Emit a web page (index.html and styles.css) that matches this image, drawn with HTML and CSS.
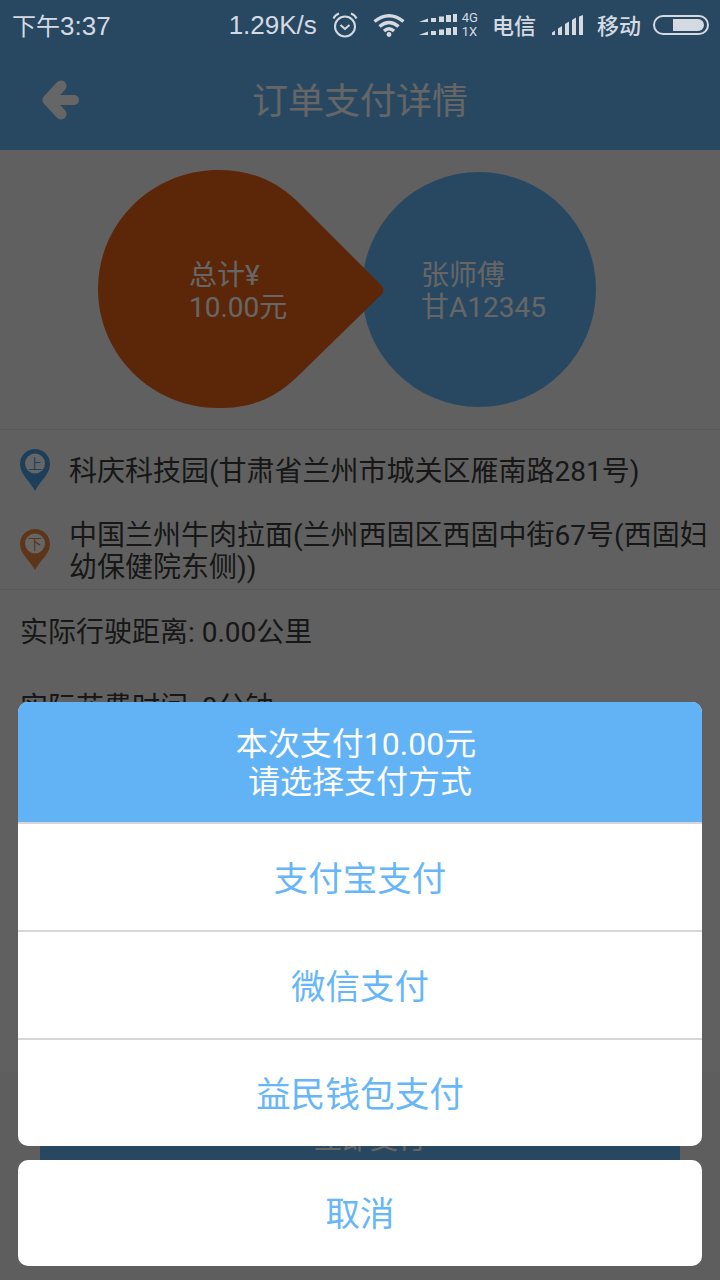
FILE: index.html
```html
<!DOCTYPE html>
<html lang="zh-CN">
<head>
    <meta charset="UTF-8">
    <meta name="viewport" content="width=device-width, initial-scale=1.0">
    <title>订单支付详情</title>
    <link rel="stylesheet" href="styles.css">
</head>
<body>

<div class="screen">

    <!-- Status bar sits above the dim layer -->
    <div class="status-bar">
        <div class="status-time"><span class="time-cn">下午</span>3:37</div>
        <div class="status-right">
            <span class="net-speed">1.29K/s</span>
            <svg class="icon-alarm" width="26" height="26" viewBox="0 0 26 26" fill="none" stroke="#d5dae2">
                <circle cx="13" cy="14.5" r="10" stroke-width="2"/>
                <path d="M8.5 13 L13 17 L17.5 13" stroke-width="2"/>
                <path d="M1.5 6.5 Q3 3 7 1.5 M24.5 6.5 Q23 3 19 1.5" stroke-width="2"/>
            </svg>
            <svg class="icon-wifi" width="32" height="24" viewBox="0 0 32 24" fill="none" stroke="#d5dae2" stroke-width="3.4">
                <path d="M1.5 8.5 Q16 -3 30.5 8.5"/>
                <path d="M6.5 13.5 Q16 5.5 25.5 13.5"/>
                <path d="M11 18 Q16 13.5 21 18"/>
                <circle cx="16" cy="21.5" r="2.4" fill="#d5dae2" stroke="none"/>
            </svg>
            <svg class="icon-data" width="38" height="22" viewBox="0 0 38 22" fill="#d5dae2">
                <path d="M0 8 L9 4.5 V8 Z M12 4 H17 V8 H12 Z M20 2.5 H25 V8 H20 Z M27 1 H32 V8 H27 Z M34 0 H38 V8 H34 Z"/>
                <path d="M0 21 L9 17.5 V21 Z M12 17 H17 V21 H12 Z M20 15.5 H25 V21 H20 Z M27 14 H32 V21 H27 Z M34 13 H38 V21 H34 Z"/>
            </svg>
            <span class="net-type">4G<br>1X</span>
            <span class="carrier carrier-first">电信</span>
            <svg class="icon-signal" width="31" height="20" viewBox="0 0 31 20" fill="#d5dae2">
                <path d="M0 20 V17.5 L3 15.5 V20 Z M6 20 V13.5 L10 11 V20 Z M13 20 V9 L17 6.5 V20 Z M20 20 V5 L24 2.5 V20 Z M27 20 V1.5 L31 0 V20 Z"/>
            </svg>
            <span class="carrier">移动</span>
            <div class="battery"><div class="battery-level"></div></div>
        </div>
    </div>

    <div class="page">
        <header class="top-bar">
            <div class="back">
                <svg width="38" height="40" viewBox="0 0 38 40" fill="none" stroke="#fff" stroke-linecap="round" stroke-linejoin="round">
                    <path d="M32 20 H10" stroke-width="10"/>
                    <path d="M19 6 L6 20 L19 34" stroke-width="11"/>
                </svg>
            </div>
            <h1>订单支付详情</h1>
        </header>

        <section class="summary">
            <div class="drop">
                <svg class="drop-shape" width="288" height="238" viewBox="0 0 288 238">
                    <path d="M120 0 C152 0 176 10 198 30 L283 115 Q288 120 283 125 L198 208 C174 230 152 238 120 238 C54 238 0 185 0 119 C0 53 54 0 120 0 Z" fill="#e66114"/>
                </svg>
                <div class="drop-text">总计¥<br>10.00元</div>
            </div>
            <div class="driver">
                <div class="driver-text">张师傅<br>甘A12345</div>
            </div>
        </section>

        <section class="route">
            <div class="route-row">
                <svg class="pin" width="30" height="42" viewBox="0 0 30 42">
                    <path d="M15 0 C6.7 0 0 6.7 0 15 C0 25 9 31 15 42 C21 31 30 25 30 15 C30 6.7 23.3 0 15 0 Z" fill="#4a9ee0"/>
                    <circle cx="15" cy="14.5" r="10" fill="#fff"/>
                    <text x="15" y="19.5" text-anchor="middle" class="pin-label pin-up">上</text>
                </svg>
                <div class="route-text">科庆科技园(甘肃省兰州市城关区雁南路281号)</div>
            </div>
            <div class="route-row">
                <svg class="pin" width="30" height="41" viewBox="0 0 30 41">
                    <path d="M15 0 C6.7 0 0 6.7 0 15 C0 25 9 30 15 41 C21 30 30 25 30 15 C30 6.7 23.3 0 15 0 Z" fill="#e8843c"/>
                    <circle cx="15" cy="14.5" r="10" fill="#fff"/>
                    <text x="15" y="19.5" text-anchor="middle" class="pin-label pin-down">下</text>
                </svg>
                <div class="route-text">中国兰州牛肉拉面(兰州西固区西固中街67号(西固妇幼保健院东侧))</div>
            </div>
        </section>

        <section class="trip-info">
            <p>实际行驶距离: 0.00公里</p>
            <p>实际花费时间: 0分钟</p>
        </section>

        <footer class="pay-bar">
            <button class="pay-btn">立即支付</button>
        </footer>
    </div>

    <!-- Dim layer + payment sheet -->
    <div class="overlay"></div>
    <div class="sheet-wrap">
        <div class="sheet">
            <div class="sheet-title">本次支付10.00元&nbsp;<br>请选择支付方式</div>
            <div class="sheet-option">支付宝支付</div>
            <div class="sheet-option">微信支付</div>
            <div class="sheet-option option-wide">益民钱包支付</div>
        </div>
        <div class="sheet cancel">取消</div>
    </div>

</div>

</body>
</html>
```

FILE: styles.css
```css
/* General page styling */
html, body {
    margin: 0;
    padding: 0;
}

body {
    font-family: Roboto, "Noto Sans CJK SC", sans-serif;
    background-color: #f0f0f0;
}

.screen {
    position: relative;
    width: 720px;
    height: 1280px;
    overflow: hidden;
    display: flex;
    flex-direction: column;
}

/* Status bar */
.status-bar {
    position: relative;
    z-index: 3;
    height: 50px;
    flex-shrink: 0;
    display: flex;
    justify-content: space-between;
    align-items: center;
    padding: 0 11px 0 12px;
    background-color: #284862;
    color: #d5dae2;
    font-family: "Liberation Sans", "Noto Sans CJK SC", sans-serif;
    font-size: 26px;
}

.status-time {
    margin-top: -2px;
}

.time-cn {
    font-size: 24px;
}

.status-right {
    display: flex;
    align-items: center;
}

.icon-alarm {
    margin-left: 15px;
}

.icon-wifi {
    margin-left: 15px;
}

.icon-data {
    margin-left: 14px;
}

.net-type {
    margin-left: 5px;
    font-family: Roboto, sans-serif;
    font-size: 13px;
    line-height: 14px;
}

.carrier {
    margin: -3px 0 0 14px;
    font-family: "Noto Sans CJK SC", sans-serif;
    font-size: 22px;
    font-weight: 500;
}

.icon-signal {
    margin-left: 16px;
}

.battery {
    box-sizing: border-box;
    width: 56px;
    height: 20px;
    margin-left: 12px;
    padding: 2px 3px;
    display: flex;
    justify-content: flex-end;
    border: 2px solid #d5dae2;
    border-radius: 10px;
}

.battery-level {
    width: 31px;
    background-color: #d5dae2;
    border-radius: 0 6px 6px 0;
}

/* Underlying page */
.page {
    flex: 1;
    display: flex;
    flex-direction: column;
    min-height: 0;
}

.top-bar {
    height: 100px;
    flex-shrink: 0;
    display: grid;
    grid-template-columns: 1fr auto 1fr;
    align-items: center;
    background-color: #64b4f5;
    color: #fff;
}

.top-bar h1 {
    grid-column: 2;
    grid-row: 1;
    margin: 0;
    padding-bottom: 4px;
    font-size: 36px;
    font-weight: 400;
}

.back {
    grid-column: 1;
    grid-row: 1;
    padding-left: 42px;
    display: flex;
}

.summary {
    height: 280px;
    flex-shrink: 0;
    box-sizing: border-box;
    display: flex;
    align-items: center;
    padding: 0 0 2px 98px;
    border-bottom: 1px solid #ddd;
    color: #fff;
    font-size: 28px;
    line-height: 32px;
}

.drop {
    position: relative;
    z-index: 1;
    width: 288px;
    height: 238px;
    flex-shrink: 0;
    display: flex;
    align-items: center;
}

.drop-shape {
    position: absolute;
    top: 0;
    left: 0;
}

.drop-text {
    position: relative;
    padding: 6px 0 0 91px;
}

.driver {
    width: 234px;
    height: 235px;
    flex-shrink: 0;
    margin: 1px 0 0 -24px;
    display: flex;
    align-items: center;
    padding: 6px 0 0 59px;
    box-sizing: border-box;
    background-color: #64b4f5;
    border-radius: 50%;
}

.route {
    height: 160px;
    flex-shrink: 0;
    box-sizing: border-box;
    padding: 19px 10px 0 20px;
    border-bottom: 1px solid #ddd;
    color: #3a3a3a;
    font-size: 28px;
    line-height: 32px;
}

.route-row {
    display: flex;
    align-items: flex-start;
    margin-bottom: 29px;
}

.route-row:last-child {
    margin-bottom: 0;
}

.route-row:last-child .pin {
    margin-top: 9px;
}

.route-row:last-child .route-text {
    margin-top: 0;
}

.route-text {
    margin: 7px 0 0 19px;
}

.pin {
    flex-shrink: 0;
}

.pin-label {
    font-family: "Noto Sans CJK SC", sans-serif;
    font-size: 14px;
}

.pin-up {
    fill: #4a9ee0;
}

.pin-down {
    fill: #e8843c;
}

.trip-info {
    flex: 1;
    padding: 0 20px;
    color: #3a3a3a;
    font-size: 28px;
    line-height: 32px;
}

.trip-info p {
    margin: 27px 0 43px;
}

.pay-bar {
    height: 208px;
    flex-shrink: 0;
    box-sizing: border-box;
    padding: 24px 40px 0;
    background-color: #ececec;
}

.pay-btn {
    display: block;
    width: 100%;
    height: 82px;
    padding: 0 0 0 20px;
    border: none;
    background-color: #64b4f5;
    color: #fff;
    font-family: inherit;
    font-size: 28px;
}

/* Dim layer and payment sheet */
.overlay {
    position: absolute;
    top: 0;
    right: 0;
    bottom: 0;
    left: 0;
    z-index: 2;
    background-color: rgba(0, 0, 0, 0.6);
}

.sheet-wrap {
    position: absolute;
    right: 18px;
    bottom: 14px;
    left: 18px;
    z-index: 3;
    display: flex;
    flex-direction: column;
    gap: 14px;
}

.sheet {
    overflow: hidden;
    background-color: #fff;
    border-radius: 10px;
    color: #66b6f8;
    text-align: center;
}

.sheet-title {
    height: 120px;
    box-sizing: border-box;
    padding-top: 23px;
    background-color: #62b2f6;
    color: #fff;
    font-size: 32px;
    line-height: 38px;
}

.sheet-option {
    height: 106px;
    border-top: 2px solid #d6d6d6;
    font-size: 34.5px;
    line-height: 110px;
}

.option-wide {
    font-size: 34.7px;
}

.cancel {
    height: 106px;
    font-size: 34.5px;
    line-height: 108px;
}
```
